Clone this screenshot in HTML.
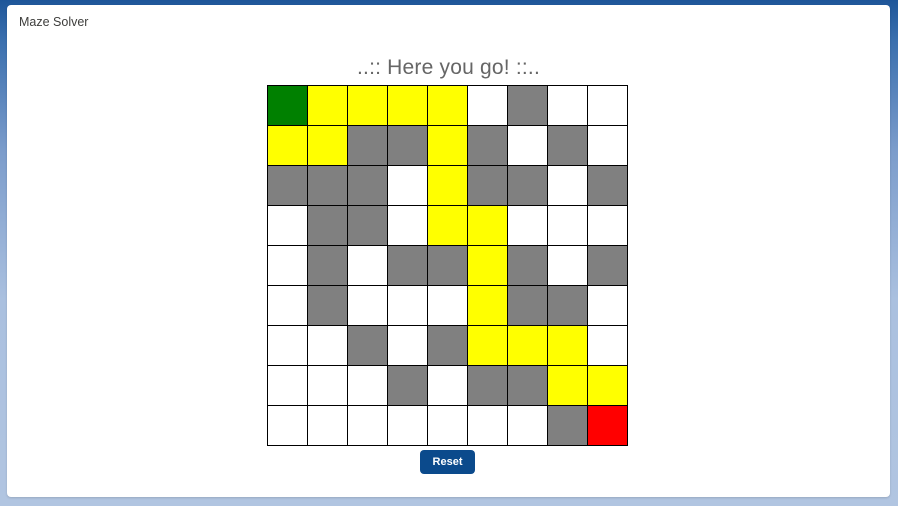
<!DOCTYPE html>
<html><head><style>
html,body{margin:0;padding:0;width:898px;height:506px;overflow:hidden;font-family:"Liberation Sans",sans-serif;
background:linear-gradient(180deg,#1e5699 0px,#3a6fae 40px,#7b9ccb 150px,#aac0df 300px,#b1c5e1 506px);}
.card{position:absolute;left:7px;top:5px;width:883px;height:492px;background:#fff;border-radius:4px;box-shadow:0 1px 2px rgba(0,0,0,.15);}
.h{position:absolute;left:12px;top:10px;font-size:12.5px;color:#3e3e3c;}
.t{position:absolute;left:0;width:883px;top:51px;text-align:center;font-size:21px;color:#666;font-weight:300;letter-spacing:0.2px;}
.g{position:absolute;left:260px;top:80px;display:grid;grid-template-columns:repeat(9,40px);grid-auto-rows:40px;border-left:1px solid #000;border-top:1px solid #000;width:360px}
.g div{border-right:1px solid #000;border-bottom:1px solid #000;box-sizing:border-box;width:40px;height:40px}
.W{background:#fff}.Y{background:#ff0}.A{background:#808080}.G{background:#008000}.R{background:#f00}
.b{position:absolute;left:413px;top:445px;width:55px;height:24px;background:#0b4a8c;border-radius:4px;color:#fff;font-size:11px;font-weight:bold;text-align:center;line-height:24px;}
</style></head><body>
<div class="card">
<div class="h">Maze Solver</div>
<div class="t">..:: Here you go! ::..</div>
<div class="g">
<div class="G"></div><div class="Y"></div><div class="Y"></div><div class="Y"></div><div class="Y"></div><div class="W"></div><div class="A"></div><div class="W"></div><div class="W"></div>
<div class="Y"></div><div class="Y"></div><div class="A"></div><div class="A"></div><div class="Y"></div><div class="A"></div><div class="W"></div><div class="A"></div><div class="W"></div>
<div class="A"></div><div class="A"></div><div class="A"></div><div class="W"></div><div class="Y"></div><div class="A"></div><div class="A"></div><div class="W"></div><div class="A"></div>
<div class="W"></div><div class="A"></div><div class="A"></div><div class="W"></div><div class="Y"></div><div class="Y"></div><div class="W"></div><div class="W"></div><div class="W"></div>
<div class="W"></div><div class="A"></div><div class="W"></div><div class="A"></div><div class="A"></div><div class="Y"></div><div class="A"></div><div class="W"></div><div class="A"></div>
<div class="W"></div><div class="A"></div><div class="W"></div><div class="W"></div><div class="W"></div><div class="Y"></div><div class="A"></div><div class="A"></div><div class="W"></div>
<div class="W"></div><div class="W"></div><div class="A"></div><div class="W"></div><div class="A"></div><div class="Y"></div><div class="Y"></div><div class="Y"></div><div class="W"></div>
<div class="W"></div><div class="W"></div><div class="W"></div><div class="A"></div><div class="W"></div><div class="A"></div><div class="A"></div><div class="Y"></div><div class="Y"></div>
<div class="W"></div><div class="W"></div><div class="W"></div><div class="W"></div><div class="W"></div><div class="W"></div><div class="W"></div><div class="A"></div><div class="R"></div>
</div>
<div class="b">Reset</div>
</div>
</body></html>
